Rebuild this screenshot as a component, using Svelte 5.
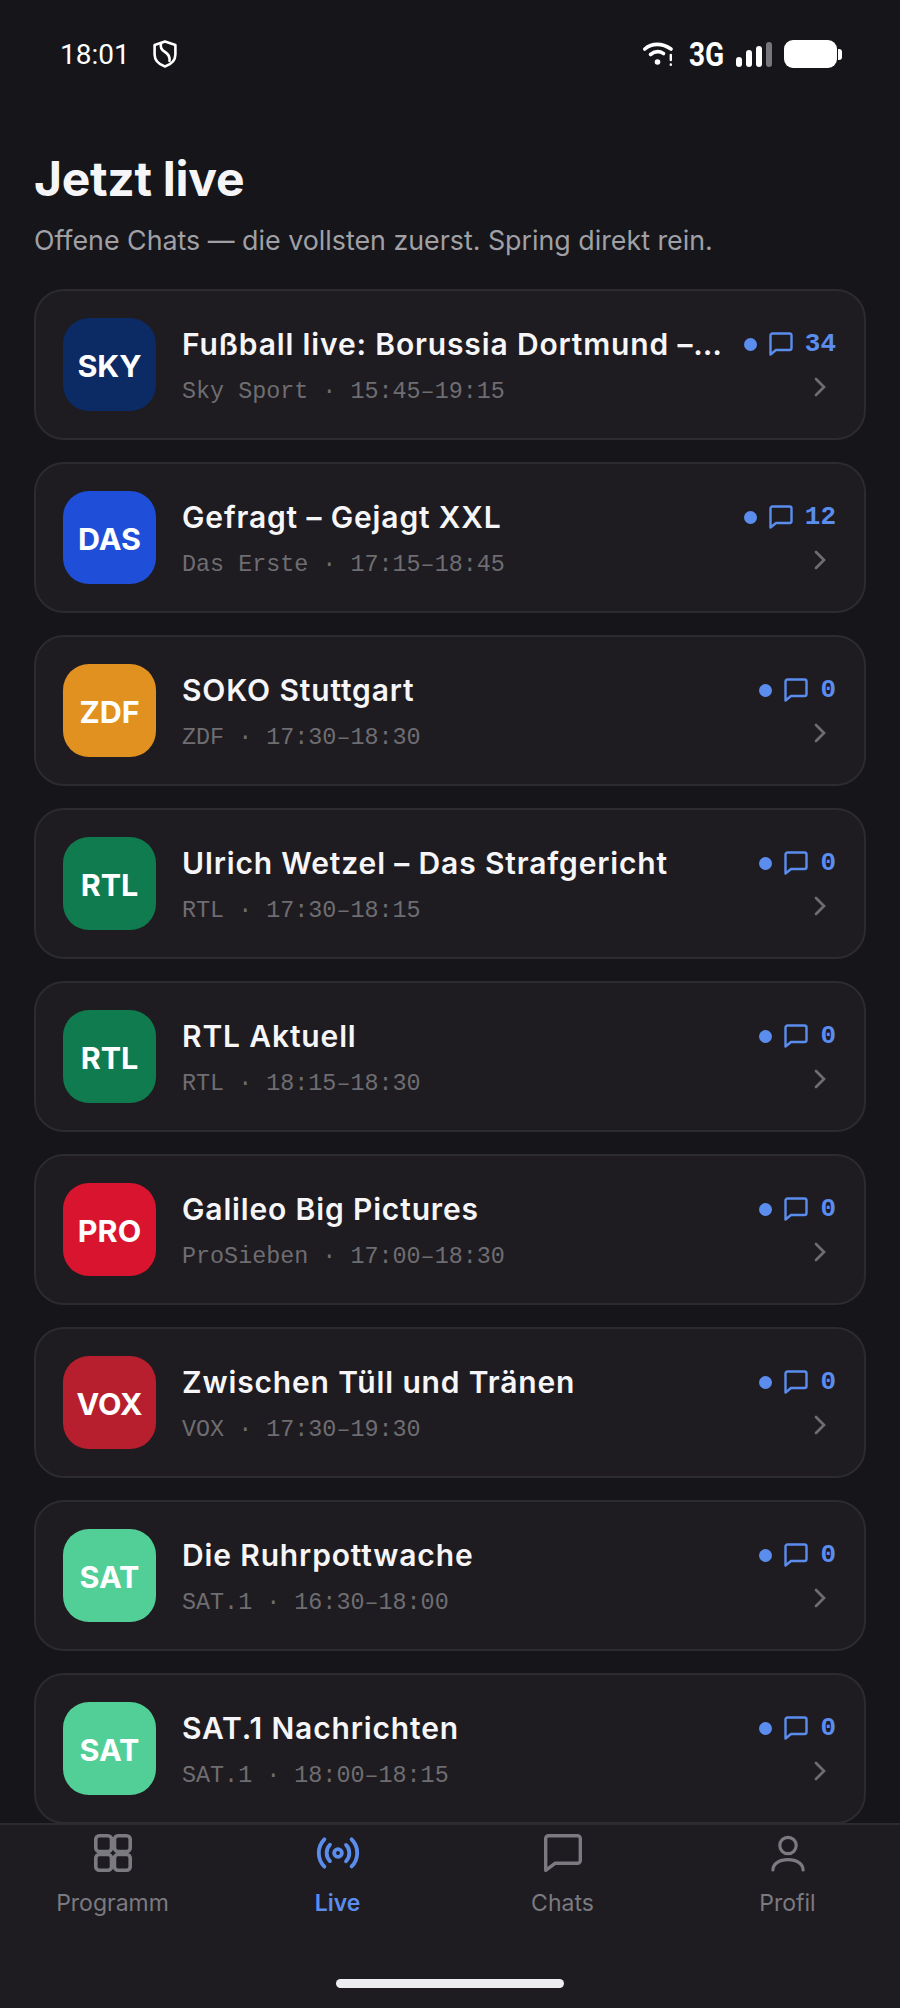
<script lang="ts">
  const shows = [
    { logo: 'SKY', color: '#0c2a63', title: 'Fußball live: Borussia Dortmund –…', meta: 'Sky Sport · 15:45–19:15', count: 34 },
    { logo: 'DAS', color: '#1f4fd8', title: 'Gefragt – Gejagt XXL', meta: 'Das Erste · 17:15–18:45', count: 12 },
    { logo: 'ZDF', color: '#e0911f', title: 'SOKO Stuttgart', meta: 'ZDF · 17:30–18:30', count: 0 },
    { logo: 'RTL', color: '#0f7b4f', title: 'Ulrich Wetzel – Das Strafgericht', meta: 'RTL · 17:30–18:15', count: 0 },
    { logo: 'RTL', color: '#0f7b4f', title: 'RTL Aktuell', meta: 'RTL · 18:15–18:30', count: 0 },
    { logo: 'PRO', color: '#d9142e', title: 'Galileo Big Pictures', meta: 'ProSieben · 17:00–18:30', count: 0 },
    { logo: 'VOX', color: '#b81f2e', title: 'Zwischen Tüll und Tränen', meta: 'VOX · 17:30–19:30', count: 0 },
    { logo: 'SAT', color: '#52cf97', title: 'Die Ruhrpottwache', meta: 'SAT.1 · 16:30–18:00', count: 0 },
    { logo: 'SAT', color: '#52cf97', title: 'SAT.1 Nachrichten', meta: 'SAT.1 · 18:00–18:15', count: 0 }
  ];
  const tabs = ['Programm', 'Live', 'Chats', 'Profil'];
</script>

<div class="screen">
  <header class="status">
    <div class="status-left">
      <span class="time">18:01</span>
      <svg class="shield" viewBox="0 0 24 28" fill="none" stroke="#fff" stroke-width="2.6" stroke-linejoin="round" stroke-linecap="round">
        <path d="M12 1.600 22.400 5v9.500c0 5.600-4 9.800-10.400 12C5.600 24.300 1.600 20.100 1.600 14.500V5Z" />
        <path d="M8 3.500c-1 4 .5 6.500 4 8.500 3.500 2 5 4.500 4.500 9" />
      </svg>
    </div>
    <div class="status-right">
      <svg class="wifi" viewBox="0 0 30 24" fill="none" stroke="#fff" stroke-width="3.600" stroke-linecap="round">
        <path d="M1.800 7C9 .8 19 .8 28 7" />
        <path d="M7.500 12.500c4.500-3.500 9-3.500 13-1" />
        <circle cx="14.500" cy="20" r="2.800" fill="#fff" stroke="none" />
        <path d="M27.800 13v5M27.800 22.500v.2" stroke-width="2.400" />
      </svg>
      <span class="net">3G</span>
      <div class="signal">
        <span class="bar b1"></span>
        <span class="bar b2"></span>
        <span class="bar b3"></span>
        <span class="bar b4"></span>
      </div>
      <div class="battery"><span class="nub"></span></div>
    </div>
  </header>

  <main class="content">
    <h1>Jetzt live</h1>
    <p class="lead">Offene Chats — die vollsten zuerst. Spring direkt rein.</p>
    <ul class="list">
      {#each shows as show}
        <li class="card">
          <div class="logo" style="background: {show.color}"><span>{show.logo}</span></div>
          <div class="info">
            <div class="title">{show.title}</div>
            <div class="meta">{show.meta}</div>
          </div>
          <div class="side">
            <div class="stats">
              <span class="dot"></span>
              <svg class="bubble" viewBox="0 0 24 24" fill="none" stroke="#5b8def" stroke-width="2.400" stroke-linejoin="round">
                <path d="M1.500 3.500a2 2 0 0 1 2-2h17a2 2 0 0 1 2 2v12.500a2 2 0 0 1-2 2H7l-5.500 4.500Z" />
              </svg>
              <span class="count">{show.count}</span>
            </div>
            <svg class="chevron" viewBox="0 0 24 24" fill="none" stroke="#6e6d72" stroke-width="2" stroke-linecap="round" stroke-linejoin="miter">
              <path d="m9 18 6-6-6-6" />
            </svg>
          </div>
        </li>
      {/each}
    </ul>
  </main>

  <nav class="tabbar">
    {#each tabs as tab, i}
      <div class="tab" class:active={i === 1}>
        {#if i === 0}
          <svg viewBox="0 0 38 38" fill="none" stroke="currentColor" stroke-width="3.600">
            <rect x="1.800" y="1.800" width="15.700" height="15.700" rx="3.500" />
            <rect x="20.500" y="1.800" width="15.700" height="15.700" rx="3.500" />
            <rect x="1.800" y="20.500" width="15.700" height="15.700" rx="3.500" />
            <rect x="20.500" y="20.500" width="15.700" height="15.700" rx="3.500" />
          </svg>
        {:else if i === 1}
          <svg viewBox="0 0 24 24" fill="none" stroke="currentColor" stroke-width="2" stroke-linecap="round" stroke-linejoin="round">
            <path d="M4.900 19.100C1 15.200 1 8.800 4.900 4.900" />
            <path d="M7.800 16.200c-2.300-2.300-2.300-6.100 0-8.500" />
            <circle cx="12" cy="12" r="2" />
            <path d="M16.200 7.800c2.300 2.300 2.300 6.100 0 8.500" />
            <path d="M19.100 4.900C23 8.800 23 15.100 19.100 19" />
          </svg>
        {:else if i === 2}
          <svg viewBox="0 0 38 38" fill="none" stroke="currentColor" stroke-width="3.400" stroke-linejoin="round">
            <path d="M1.700 4.500a2.800 2.800 0 0 1 2.800-2.800h29a2.800 2.800 0 0 1 2.800 2.800v22a2.800 2.800 0 0 1-2.800 2.800H11L1.700 36.300Z" />
          </svg>
        {:else}
          <svg viewBox="0 0 38 38" fill="none" stroke="currentColor" stroke-width="3.200" stroke-linecap="round">
            <circle cx="19" cy="11.500" r="8.200" />
            <path d="M3.900 36c0-6 6-10.300 15.100-10.300S34.100 30 34.100 36" />
          </svg>
        {/if}
        <span class="label">{tab}</span>
      </div>
    {/each}
    <div class="home"></div>
  </nav>
</div>

<style>
  :global(body) {
    background: #15151a;
  }

  .screen {
    height: 2008px;
    display: flex;
    flex-direction: column;
    overflow: hidden;
    background: #15151a;
    color: #fff;
    font-family: Inter, sans-serif;
  }

  .status {
    flex: none;
    height: 108px;
    box-sizing: border-box;
    padding: 38px 63px 0 60px;
    display: flex;
    align-items: flex-start;
    justify-content: space-between;
  }

  .status-left {
    display: flex;
    align-items: center;
    gap: 23px;
    height: 32px;
  }

  .time {
    font-family: Roboto, sans-serif;
    font-size: 28px;
  }

  .shield {
    width: 24px;
    height: 28px;
  }

  .status-right {
    display: flex;
    align-items: center;
    height: 32px;
  }

  .wifi {
    width: 30px;
    height: 24px;
  }

  .net {
    font-family: Roboto, sans-serif;
    font-weight: 700;
    font-size: 33px;
    width: 34px;
    margin-left: 16px;
    transform: scaleX(0.85);
    transform-origin: left center;
    white-space: nowrap;
  }

  .signal {
    margin-left: 13px;
    display: flex;
    align-items: flex-end;
    gap: 4px;
    height: 26px;
  }

  .bar {
    width: 6px;
    border-radius: 3px;
    background: #fff;
  }

  .b1 { height: 10px; }
  .b2 { height: 17px; }
  .b3 { height: 21px; }
  .b4 { height: 25px; background: #77777b; }

  .battery {
    position: relative;
    margin-left: 12px;
    width: 53px;
    height: 28px;
    border-radius: 9px;
    background: #fff;
  }

  .nub {
    position: absolute;
    left: 54px;
    top: 9px;
    width: 4px;
    height: 11px;
    border-radius: 0 3px 3px 0;
    background: #fff;
  }

  .content {
    flex: 1;
    min-height: 0;
    overflow: hidden;
    padding: 0 34px;
  }

  h1 {
    margin: 43px 0 0;
    font-size: 48px;
    line-height: 56px;
    font-weight: 700;
    letter-spacing: -0.3px;
    color: #f5f5f8;
  }

  .lead {
    margin: 15px 0 0;
    font-size: 26.800px;
    line-height: 36px;
    color: #a0a0a6;
  }

  .list {
    list-style: none;
    margin: 31px 0 0;
    padding: 0;
    display: flex;
    flex-direction: column;
    gap: 22px;
  }

  .card {
    flex: none;
    box-sizing: border-box;
    height: 151px;
    padding: 0 28px 0 27px;
    display: flex;
    align-items: center;
    border: 2px solid #2c2b30;
    border-radius: 30px;
    background: #1e1c20;
  }

  .logo {
    flex: none;
    width: 93px;
    height: 93px;
    border-radius: 26px;
    display: flex;
    align-items: center;
    justify-content: center;
    font-size: 30.500px;
    font-weight: 700;
    color: #fff;
  }

  .logo span {
    margin-top: 2px;
  }

  .info {
    flex: 1;
    min-width: 0;
    margin-left: 26px;
  }

  .title {
    margin-top: 1px;
    font-size: 30px;
    line-height: 40px;
    font-weight: 600;
    letter-spacing: 0.85px;
    color: #f6f5f8;
    white-space: nowrap;
  }

  .meta {
    margin-top: 13px;
    font-family: "Liberation Mono", monospace;
    font-size: 23.400px;
    line-height: 30px;
    color: #6e6d72;
  }

  .side {
    flex: none;
    display: flex;
    flex-direction: column;
    align-items: flex-end;
    gap: 11px;
    margin-top: 2px;
  }

  .stats {
    display: flex;
    align-items: center;
    height: 32px;
  }

  .dot {
    width: 13px;
    height: 13px;
    border-radius: 50%;
    background: #5b8def;
  }

  .bubble {
    width: 24px;
    height: 24px;
    margin-left: 12px;
  }

  .count {
    margin-left: 12px;
    font-family: "Liberation Mono", monospace;
    font-weight: 700;
    font-size: 26px;
    color: #5b8def;
  }

  .chevron {
    width: 32px;
    height: 32px;
  }

  .tabbar {
    position: relative;
    flex: none;
    height: 185px;
    box-sizing: border-box;
    border-top: 2px solid #2c2b30;
    background: #1e1c20;
    display: grid;
    grid-template-columns: repeat(4, 225px);
  }

  .tab {
    display: flex;
    flex-direction: column;
    align-items: center;
    padding-top: 9px;
    color: #7b7a80;
  }

  .tab svg {
    width: 38px;
    height: 38px;
  }

  .tab.active {
    color: #5b8def;
  }

  .tab.active svg {
    width: 46px;
    height: 46px;
    margin-top: -4px;
    margin-bottom: -4px;
  }

  .label {
    margin-top: 16px;
    font-size: 23px;
    line-height: 30px;
  }

  .tab.active .label {
    font-weight: 600;
  }

  .home {
    position: absolute;
    left: 336px;
    bottom: 20px;
    width: 228px;
    height: 9px;
    border-radius: 5px;
    background: #eeeef0;
  }
</style>
